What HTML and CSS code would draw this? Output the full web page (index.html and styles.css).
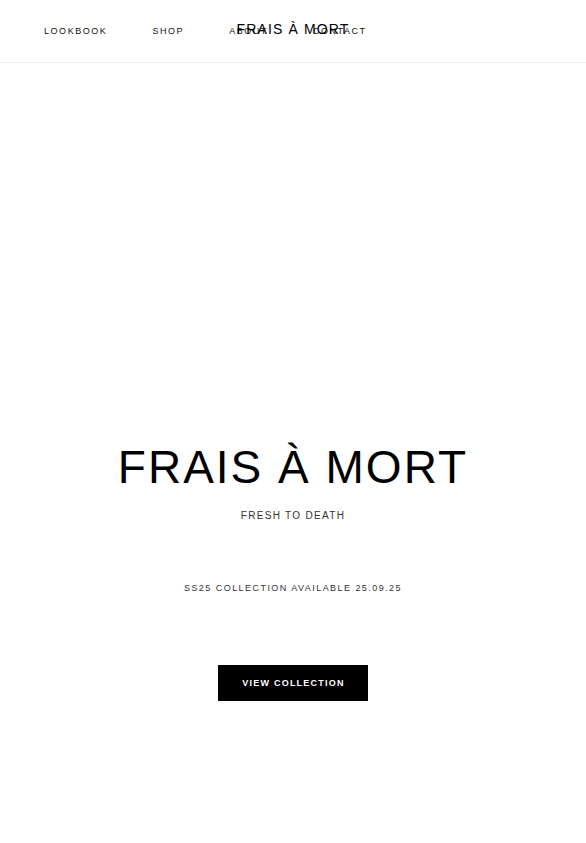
FILE: index.html
```html
<!DOCTYPE html>
<html lang="fr">
<head>
<meta charset="utf-8">
<title>Frais à Mort</title>
<link rel="stylesheet" href="styles.css">
</head>
<body>
<header class="site-header">
  <nav class="nav">
    <a class="nav-link" href="#">LOOKBOOK</a>
    <a class="nav-link" href="#">SHOP</a>
    <a class="nav-link" href="#">ABOUT</a>
    <a class="nav-link" href="#">CONTACT</a>
  </nav>
  <a class="logo" href="#">FRAIS À MORT</a>
</header>
<main class="hero">
  <h1 class="hero-title">FRAIS À MORT</h1>
  <p class="hero-sub">FRESH TO DEATH</p>
  <p class="hero-date">SS25 COLLECTION AVAILABLE 25.09.25</p>
  <a class="btn" href="#">VIEW COLLECTION</a>
</main>
</body>
</html>
```

FILE: styles.css
```css
* { box-sizing: border-box; }
html, body { margin: 0; padding: 0; background: #fff; }
body {
  font-family: "Liberation Sans", Arial, sans-serif;
  color: #000;
}
a { text-decoration: none; color: inherit; }

.site-header {
  position: relative;
  height: 63px;
  border-bottom: 1px solid #eeeeee;
  display: flex;
  align-items: center;
  padding-left: 44px;
}
.nav {
  display: flex;
  gap: 45px;
  margin-top: -1px;
}
.nav-link {
  font-size: 9px;
  line-height: 12px;
  letter-spacing: 1.55px;
  color: #111;
}
.logo {
  position: absolute;
  left: 50%;
  top: 21px;
  transform: translateX(-50%);
  font-size: 14px;
  line-height: 16px;
  letter-spacing: 1.15px;
  white-space: nowrap;
  color: #000;
}

.hero {
  display: flex;
  flex-direction: column;
  align-items: center;
  padding-top: 379px;
}
.hero-title {
  margin: 0;
  font-weight: 400;
  font-size: 46px;
  line-height: 50px;
  letter-spacing: 2px;
  padding-left: 0;
}
.hero-sub {
  margin: 18px 0 0;
  font-size: 10px;
  line-height: 12px;
  letter-spacing: 1.3px;
  color: #333;
}
.hero-date {
  margin: 60px 0 0;
  font-size: 9px;
  line-height: 12px;
  letter-spacing: 1.45px;
  color: #333;
}
.btn {
  margin-top: 71px;
  background: #000;
  color: #fff;
  font-size: 9px;
  font-weight: 700;
  line-height: 12px;
  letter-spacing: 1.25px;
  padding: 12px 23px 12px 24px;
}
```
